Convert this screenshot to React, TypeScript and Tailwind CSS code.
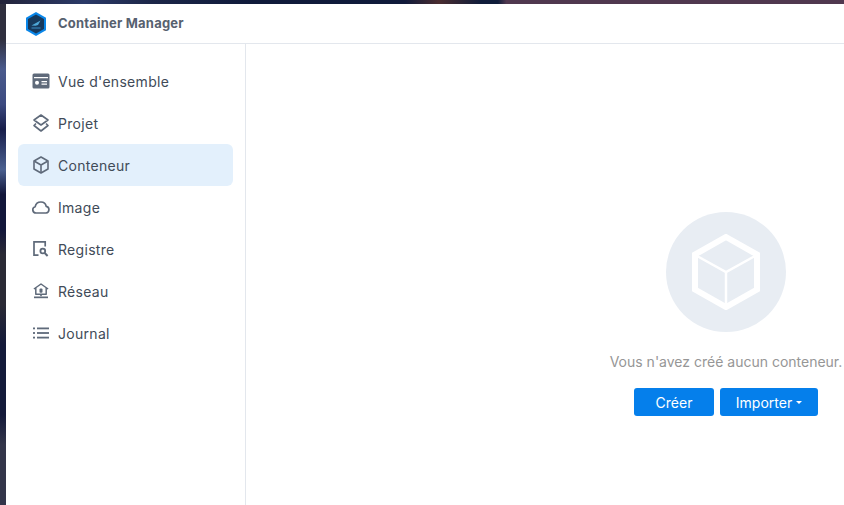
import type { ReactNode } from 'react';

const ICON = '#5f6a7a';

function OverviewIcon() {
  return (
    <svg width="18" height="16" viewBox="0 0 18 16">
      <path
        fillRule="evenodd"
        fill={ICON}
        d="M2 .5h14A1.500 1.500 0 0 1 17.500 2v12a1.500 1.500 0 0 1-1.500 1.500H2A1.500 1.500 0 0 1 .5 14V2A1.500 1.500 0 0 1 2 .5zM2 4v1.200h14V4zM5 7.700a2 2 0 1 0 0 4 2 2 0 0 0 0-4zM9.500 8v1.200H15V8zm0 2.500v1.200H15v-1.200z"
      />
    </svg>
  );
}

function ProjectIcon() {
  return (
    <svg width="18" height="18" viewBox="0 0 18 18" fill="none" stroke={ICON} strokeWidth="1.600" strokeLinejoin="round">
      <path d="M9 1 16 6 9 11 2 6z" />
      <path d="M4 9.500 2 11.500l7 5.500 7-5.500-2-2" />
    </svg>
  );
}

function CubeIcon() {
  return (
    <svg width="16" height="18" viewBox="0 0 16 18" fill="none" stroke={ICON} strokeWidth="1.600" strokeLinejoin="round">
      <path d="M8 1 15 5v8l-7 4-7-4V5z" />
      <path d="M1.500 5.300 8 9l6.500-3.700M8 9v7.500" />
    </svg>
  );
}

function CloudIcon() {
  return (
    <svg width="18" height="13" viewBox="0 0 18 13" fill="none" stroke={ICON} strokeWidth="1.700" strokeLinejoin="round">
      <path d="M4.500 12H4a3.200 3.200 0 0 1-.8-6.300A5.800 5.800 0 0 1 9 1a5.400 5.400 0 0 1 5.200 4.300A3.400 3.400 0 0 1 14 12z" />
    </svg>
  );
}

function RegistryIcon() {
  return (
    <svg width="16" height="16" viewBox="0 0 16 16" fill="none" stroke={ICON} strokeWidth="1.700">
      <path d="M5.500 14.200H1V.9h11.200v4.600" />
      <circle cx="9.800" cy="10" r="2.400" strokeWidth="1.800" />
      <path d="m11.700 12 2.900 3" strokeWidth="2" />
    </svg>
  );
}

function NetworkIcon() {
  return (
    <svg width="16" height="16" viewBox="0 0 16 16">
      <path fill="none" stroke={ICON} strokeWidth="1.500" strokeLinejoin="round" d="M.9 6 8 1l7.100 5M2.800 5v6.300h10.400V5" />
      <rect x="6.500" y="5.500" width="3" height="4.200" fill={ICON} rx="1" />
      <rect x="7.200" y="11" width="1.600" height="2.200" fill={ICON} />
      <rect x="1" y="13.500" width="14" height="1.700" fill={ICON} />
    </svg>
  );
}

function ListIcon() {
  return (
    <svg width="16" height="12" viewBox="0 0 16 12" fill={ICON}>
      <rect x="0" y="0.500" width="2" height="1.800" />
      <rect x="4" y="0.500" width="12" height="1.800" />
      <rect x="0" y="5.100" width="2" height="1.800" />
      <rect x="4" y="5.100" width="12" height="1.800" />
      <rect x="0" y="9.700" width="2" height="1.800" />
      <rect x="4" y="9.700" width="12" height="1.800" />
    </svg>
  );
}

function Logo() {
  return (
    <svg width="22" height="24" viewBox="0 0 22 24">
      <path d="M11 0 21 5.800v12.400L11 24 1 18.200V5.800z" fill="#0a86e8" />
      <path d="M11 2.500 19 7.100v9.800l-8 4.600-8-4.600V7.100z" fill="#17395c" />
      <path d="M6.500 13.500 15.500 8.500 13 13l-2.500.8z" fill="#4fa8d8" />
      <path d="M6.500 16h9" stroke="#3c8fc6" strokeWidth="1" />
    </svg>
  );
}

const NAV: { label: string; icon: ReactNode; active?: boolean }[] = [
  { label: "Vue d'ensemble", icon: <OverviewIcon /> },
  { label: 'Projet', icon: <ProjectIcon /> },
  { label: 'Conteneur', icon: <CubeIcon />, active: true },
  { label: 'Image', icon: <CloudIcon /> },
  { label: 'Registre', icon: <RegistryIcon /> },
  { label: 'Réseau', icon: <NetworkIcon /> },
  { label: 'Journal', icon: <ListIcon /> },
];

export default function App() {
  return (
    <div className="w-[844px] h-[505px] overflow-hidden flex flex-col font-['Inter','Liberation_Sans',sans-serif]">
      {/* Wallpaper strips */}
      <div className="h-[4px] shrink-0 bg-[linear-gradient(90deg,#23243a_0%,#2b3a68_10%,#1c2648_18%,#0f1a3a_30%,#101a3a_48%,#4a2c30_52%,#0f1c3a_57%,#0f1c3a_59%,#50384f_60%,#50384f_100%)]" />
      <div className="flex-1 min-h-0 flex">
        <div className="w-[6px] shrink-0 bg-[linear-gradient(180deg,#2f2f3e_0%,#2f2f3e_7%,#4a5a8c_13%,#3c4a80_20%,#171d4a_25%,#4a6090_33%,#12163a_38%,#12163a_45%,#2a2a35_50%,#2a2a35_60%,#141a3a_68%,#141a3a_82%,#33354a_88%,#33354a_100%)]" />

        <div className="flex-1 min-w-0 flex flex-col bg-white rounded-tl-[4px]">
          {/* Title bar */}
          <div className="h-[39px] shrink-0 flex items-center border-b border-[#e3e7ed] box-content">
            <div className="ml-[19px] w-[22px] flex items-center">
              <Logo />
            </div>
            <span className="ml-[11px] text-[13px] tracking-[0.2px] font-bold text-[#57616f]">Container Manager</span>
          </div>

          <div className="flex-1 min-h-0 flex">
            {/* Sidebar */}
            <div className="w-[240px] shrink-0 border-r border-[#e3e7ed] pt-[16px] pl-[12px] pr-[12px]">
              {NAV.map(item => (
                <div
                  key={item.label}
                  className={`h-[42px] flex items-center rounded-[6px] ${item.active ? 'bg-[#e3f0fc]' : ''}`}
                >
                  <div className="w-[46px] flex items-center justify-center">{item.icon}</div>
                  <span className="ml-[-6px] text-[14px] tracking-[0.3px] text-[#414b58]">{item.label}</span>
                </div>
              ))}
            </div>

            {/* Empty state */}
            <div className="flex-1 min-w-0 flex flex-col items-center pt-[168px] pl-[362px] overflow-hidden">
              <div className="shrink-0 w-[120px] h-[120px] rounded-full bg-[#e8edf3] flex items-center justify-center">
                <svg width="68" height="76" viewBox="0 0 68 76" fill="none" stroke="white" strokeWidth="6" strokeLinejoin="miter">
                  <path d="M34 3 65 20.500v35L34 73 3 55.500v-35z" />
                  <path d="M5 22 34 38 63 22" strokeWidth="2.500" />
                  <path d="M34 38v33" strokeWidth="2.500" />
                </svg>
              </div>
              <p className="mt-[22px] shrink-0 whitespace-nowrap text-[14px] leading-[16px] text-[#969696]">Vous n'avez créé aucun conteneur.</p>
              <div className="mt-[18px] shrink-0 flex gap-[6px]">
                <button className="w-[80px] h-[28px] rounded-[3px] bg-[#057feb] text-white text-[14px]">Créer</button>
                <button className="w-[98px] h-[28px] rounded-[3px] bg-[#057feb] text-white text-[14px] flex items-center justify-center gap-[4px]">
                  Importer
                  <span className="w-0 h-0 border-x-[3.500px] border-x-transparent border-t-[3.500px] border-t-white" />
                </button>
              </div>
            </div>
          </div>
        </div>
      </div>
    </div>
  );
}
